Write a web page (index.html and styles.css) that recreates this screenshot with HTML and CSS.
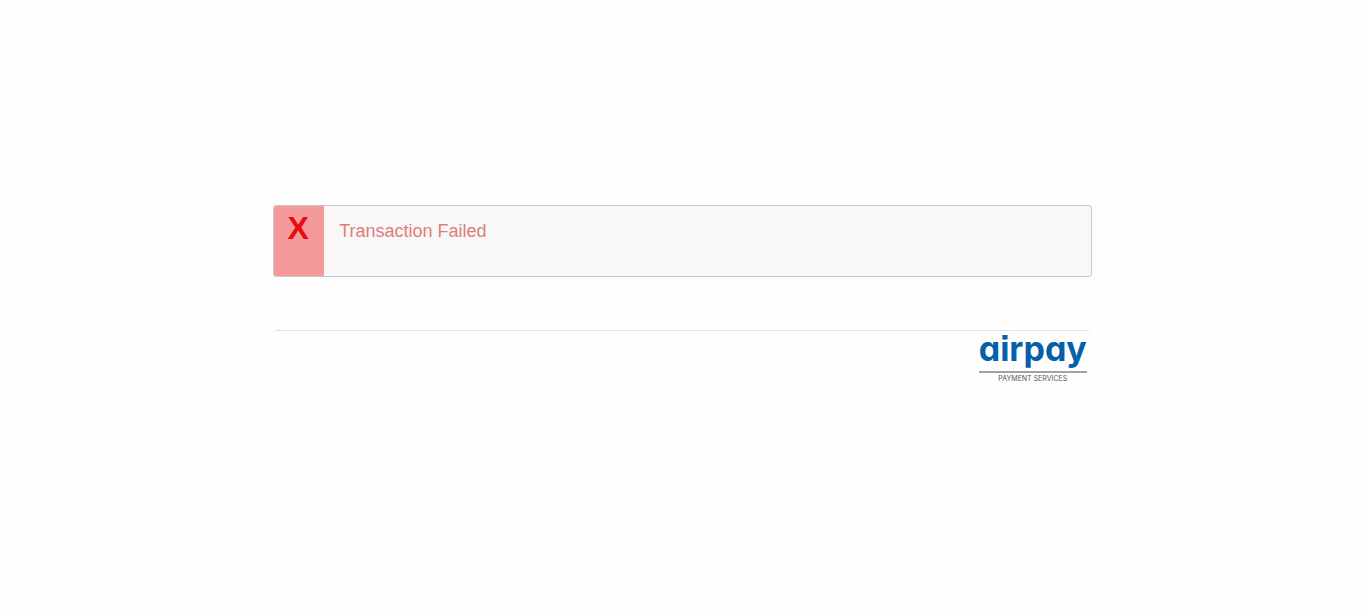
FILE: index.html
```html
<!DOCTYPE html>
<html lang="en">
<head>
<meta charset="utf-8">
<meta name="viewport" content="width=device-width, initial-scale=1">
<title>Transaction Failed</title>
<link rel="stylesheet" href="styles.css">
</head>
<body>
<main class="page">
  <section class="alert" role="alert">
    <div class="alert-mark">X</div>
    <p class="alert-text">Transaction Failed</p>
  </section>
  <footer class="footer">
    <div class="logo">
      <span class="logo-name">airpay</span>
      <span class="logo-tagline">PAYMENT SERVICES</span>
    </div>
  </footer>
</main>
</body>
</html>
```
FILE: styles.css
```css
* {
  box-sizing: border-box;
}

body {
  margin: 0;
  background: #fefefe;
  font-family: "Liberation Sans", Arial, sans-serif;
}

.page {
  width: 60%;
  margin: 0 auto;
  padding: 205px 1px 0 0;
}

.alert {
  display: flex;
  min-height: 72px;
  overflow: hidden;
  border: 1px solid #c8c8c8;
  border-radius: 3px;
  background: #f8f8f8;
}

.alert-mark {
  flex: 0 0 50px;
  padding: 4px 2px 0 0;
  background: #f59a9a;
  color: #e90c0c;
  font-size: 32px;
  font-weight: bold;
  line-height: 36px;
  text-align: center;
}

.alert-text {
  margin: 0;
  padding: 15px;
  color: #e07c7c;
  font-size: 18px;
  line-height: 20px;
}

.footer {
  display: flex;
  justify-content: flex-end;
  margin: 53px 1px 0;
  padding: 0 4px;
  border-top: 1px dotted #c8c8c8;
  border-radius: 3px;
}

.logo {
  display: flex;
  flex-direction: column;
  font-family: Inter, sans-serif;
  text-align: center;
}

.logo-name {
  padding-bottom: 4px;
  border-bottom: 2px solid #a0a2a4;
  color: #0560a8;
  font-size: 34px;
  font-weight: 700;
  font-feature-settings: "cv11", "ss07";
  line-height: 36px;
}

.logo-tagline {
  padding-top: 2px;
  color: #555;
  font-size: 7px;
  line-height: 8px;
}
```
